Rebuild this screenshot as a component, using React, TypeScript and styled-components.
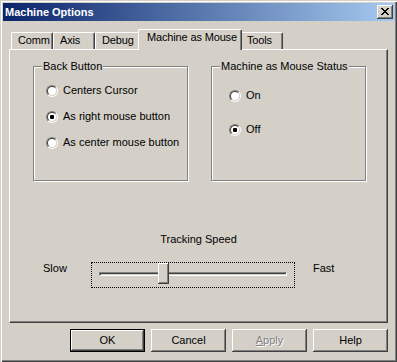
import React from "react";
import styled, { createGlobalStyle } from "styled-components";

const GlobalStyle = createGlobalStyle`
  html, body {
    margin: 0;
    padding: 0;
    background: #d4d0c8;
  }
  body {
    font-family: "Liberation Sans", Arial, sans-serif;
    font-size: 11px;
    color: #000;
  }
  * {
    box-sizing: border-box;
  }
`;

const Window = styled.div`
  width: 397px;
  height: 362px;
  background: #d4d0c8;
  padding: 3px 2px 3px 3px;
  box-shadow: inset 1px 1px #d4d0c8, inset 2px 2px #fff, inset -1px -1px #404040,
    inset -2px -2px #808080;
  display: flex;
  flex-direction: column;
`;

const TitleBar = styled.div`
  height: 18px;
  display: flex;
  align-items: center;
  justify-content: space-between;
  padding: 0 2px;
  background: linear-gradient(to right, #0a246a, #a6caf0);
`;

const Title = styled.span`
  color: #fff;
  font-weight: bold;
  line-height: 13px;
`;

const CloseButton = styled.div`
  width: 16px;
  height: 14px;
  background: #d4d0c8;
  display: flex;
  align-items: center;
  justify-content: center;
  padding: 0 1px 1px 0;
  box-shadow: inset -1px -1px #404040, inset 1px 1px #fff, inset -2px -2px #808080;
`;

const Body = styled.div`
  flex: 1;
  display: flex;
  flex-direction: column;
  padding: 8px 7px 0 6px;
`;

const TabRow = styled.div`
  display: flex;
  align-items: flex-end;
  height: 20px;
  padding-left: 2px;
`;

const Tab = styled.div<{ $width: number; $active?: boolean }>`
  width: ${({ $width, $active }) => ($active ? $width + 4 : $width)}px;
  height: ${({ $active }) => ($active ? 21 : 17)}px;
  margin: ${({ $active }) => ($active ? "0 -2px -1px -2px" : "0")};
  padding: 1px 0 0 ${({ $active }) => ($active ? 8 : 6)}px;
  line-height: 13px;
  letter-spacing: -0.15px;
  white-space: nowrap;
  background: #d4d0c8;
  border-top: 1px solid #fff;
  border-left: 1px solid #fff;
  border-right: 1px solid #404040;
  border-radius: 2px 2px 0 0;
  box-shadow: inset -1px 0 #808080;
  position: relative;
  z-index: ${({ $active }) => ($active ? 1 : 0)};
`;

const Panel = styled.div`
  width: 379px;
  height: 274px;
  border: 1px solid;
  border-color: #fff #404040 #404040 #fff;
  box-shadow: inset -1px -1px #808080;
  display: flex;
  flex-direction: column;
`;

const GroupRow = styled.div`
  display: flex;
  gap: 23px;
  margin-top: 16px;
  padding-left: 23px;
`;

const GroupBox = styled.div<{ $padLeft: number; $padTop: number; $gap: number }>`
  position: relative;
  width: 155px;
  height: 115px;
  border: 1px solid #808080;
  box-shadow: inset 1px 1px #fff, 1px 1px #fff;
  padding: ${({ $padTop, $padLeft }) => `${$padTop}px 0 0 ${$padLeft}px`};
  display: flex;
  flex-direction: column;
  gap: ${({ $gap }) => $gap}px;
`;

const GroupLabel = styled.span`
  position: absolute;
  top: -7px;
  left: 8px;
  padding: 0 1px;
  line-height: 13px;
  background: #d4d0c8;
  white-space: nowrap;
`;

const RadioRow = styled.label`
  display: flex;
  align-items: center;
  gap: 5px;
  height: 13px;
  line-height: 13px;
  white-space: nowrap;
`;

const RadioOuter = styled.span`
  width: 12px;
  height: 12px;
  flex-shrink: 0;
  border-radius: 50%;
  border: 1px solid;
  border-color: #808080 #fff #fff #808080;
  display: flex;
`;

const RadioInner = styled.span`
  width: 10px;
  height: 10px;
  border-radius: 50%;
  border: 1px solid;
  border-color: #404040 #d4d0c8 #d4d0c8 #404040;
  background: #fff;
  display: flex;
  align-items: center;
  justify-content: center;
`;

const RadioDot = styled.span<{ $on: boolean }>`
  width: 4px;
  height: 4px;
  border-radius: 1px;
  background: ${({ $on }) => ($on ? "#000" : "transparent")};
`;

const SpeedTitle = styled.div`
  margin-top: 52px;
  text-align: center;
  line-height: 13px;
`;

const SliderRow = styled.div`
  display: flex;
  align-items: flex-start;
  margin-top: 16px;
  padding-left: 33px;
  line-height: 13px;
`;

const SideLabel = styled.span<{ $width?: number; $offset?: number }>`
  width: ${({ $width }) => ($width ? `${$width}px` : "auto")};
  margin-left: ${({ $offset }) => $offset ?? 0}px;
`;

const Slider = styled.div`
  position: relative;
  width: 204px;
  height: 26px;
  border: 1px dotted #000;
  padding: 9px 7px 0;
`;

const Track = styled.div`
  height: 4px;
  border: 1px solid;
  border-color: #808080 #fff #fff #808080;
  box-shadow: inset 1px 1px #404040;
  background: #d4d0c8;
`;

const Thumb = styled.div`
  position: absolute;
  top: 0;
  width: 11px;
  height: 21px;
  background: #d4d0c8;
  box-shadow: inset -1px -1px #404040, inset 1px 1px #fff, inset -2px -2px #808080;
`;

const ButtonRow = styled.div`
  display: flex;
  justify-content: flex-end;
  gap: 6px;
  margin-top: 6px;
`;

const Button = styled.button<{ $default?: boolean }>`
  width: 75px;
  height: 23px;
  padding: 0;
  font: inherit;
  line-height: 13px;
  color: ${({ disabled }) => (disabled ? "#808080" : "#000")};
  text-shadow: ${({ disabled }) => (disabled ? "1px 1px #fff" : "none")};
  background: #d4d0c8;
  border: ${({ $default }) => ($default ? "1px solid #000" : "none")};
  box-shadow: inset -1px -1px #404040, inset 1px 1px #fff, inset -2px -2px #808080;
  cursor: default;
`;

function Radio({ label, checked }: { label: string; checked?: boolean }) {
  return (
    <RadioRow>
      <RadioOuter>
        <RadioInner>
          <RadioDot $on={!!checked} />
        </RadioInner>
      </RadioOuter>
      {label}
    </RadioRow>
  );
}

const tabs = [
  { name: "Comm", width: 42 },
  { name: "Axis", width: 42 },
  { name: "Debug", width: 45 },
  { name: "Machine as Mouse", width: 100, active: true },
  { name: "Tools", width: 43 },
];

const speed = 3;
const speedMax = 9;

export default function App() {
  const thumbLeft = 7 + Math.round((speed / speedMax) * (188 - 11));

  return (
    <>
      <GlobalStyle />
      <Window>
        <TitleBar>
          <Title>Machine Options</Title>
          <CloseButton>
            <svg width="8" height="7" viewBox="0 0 8 7" shapeRendering="crispEdges">
              <path
                fill="#000"
                d="M0 0h2v1H0zM6 0h2v1H6zM1 1h2v1H1zM5 1h2v1H5zM2 2h4v1H2zM3 3h2v1H3zM2 4h4v1H2zM1 5h2v1H1zM5 5h2v1H5zM0 6h2v1H0zM6 6h2v1H6z"
              />
            </svg>
          </CloseButton>
        </TitleBar>
        <Body>
          <TabRow>
            {tabs.map((t) => (
              <Tab key={t.name} $width={t.width} $active={t.active}>
                {t.name}
              </Tab>
            ))}
          </TabRow>
          <Panel>
            <GroupRow>
              <GroupBox $padLeft={12} $padTop={17} $gap={13}>
                <GroupLabel>Back Button</GroupLabel>
                <Radio label="Centers Cursor" />
                <Radio label="As right mouse button" checked />
                <Radio label="As center mouse button" />
              </GroupBox>
              <GroupBox $padLeft={17} $padTop={22} $gap={21}>
                <GroupLabel>Machine as Mouse Status</GroupLabel>
                <Radio label="On" />
                <Radio label="Off" checked />
              </GroupBox>
            </GroupRow>
            <SpeedTitle>Tracking Speed</SpeedTitle>
            <SliderRow>
              <SideLabel $width={48}>Slow</SideLabel>
              <Slider>
                <Track />
                <Thumb style={{ left: thumbLeft }} />
              </Slider>
              <SideLabel $offset={18}>Fast</SideLabel>
            </SliderRow>
          </Panel>
          <ButtonRow>
            <Button $default>OK</Button>
            <Button>Cancel</Button>
            <Button disabled>
              <u>A</u>pply
            </Button>
            <Button>Help</Button>
          </ButtonRow>
        </Body>
      </Window>
    </>
  );
}
